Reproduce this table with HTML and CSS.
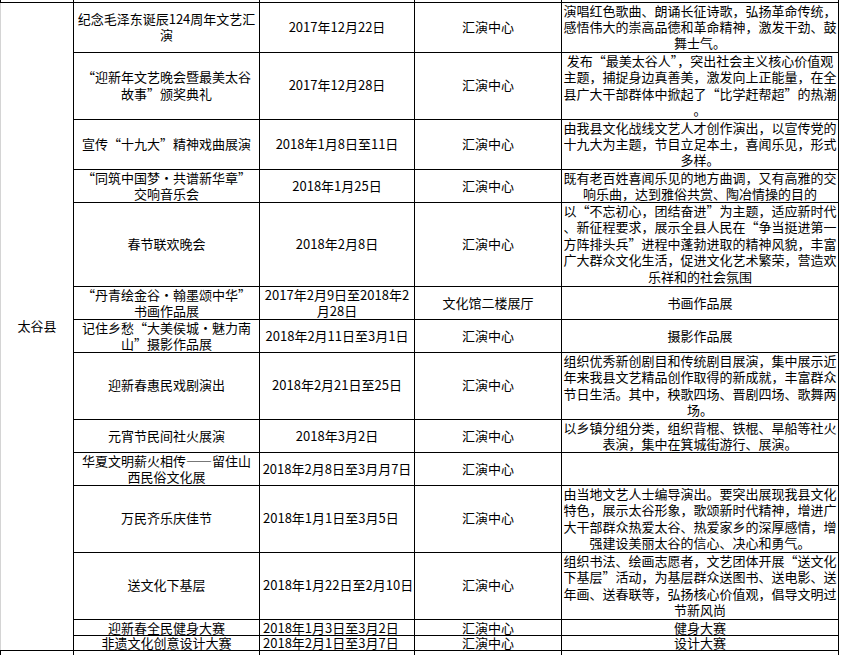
FILE: index.html
```html
<!DOCTYPE html>
<html lang="zh-CN">
<head>
<meta charset="utf-8">
<title>太谷县文化活动</title>
<link rel="stylesheet" href="styles.css">
</head>
<body>
<table class="sheet">
  <colgroup>
    <col class="c-county">
    <col class="c-name">
    <col class="c-date">
    <col class="c-venue">
    <col class="c-desc">
  </colgroup>
  <tr class="r16 cut-top">
    <td></td><td></td><td></td><td></td><td></td>
  </tr>
  <tr class="r50">
    <td class="county" rowspan="14">太谷县</td>
    <td>纪念毛泽东诞辰124周年文艺汇<br>演</td>
    <td>2017年12月22日</td>
    <td>汇演中心</td>
    <td class="fw">演唱红色歌曲、朗诵长征诗歌,弘扬革命传统,<br>感悟伟大的崇高品德和革命精神，激发干劲、鼓<br>舞士气。</td>
  </tr>
  <tr class="r67">
    <td class="fw">“迎新年文艺晚会暨最美太谷<br>故事”颁奖典礼</td>
    <td>2017年12月28日</td>
    <td>汇演中心</td>
    <td class="fw">发布“最美太谷人”，突出社会主义核心价值观<br>主题，捕捉身边真善美，激发向上正能量，在全<br>县广大干部群体中掀起了“比学赶帮超”的热潮<br>。</td>
  </tr>
  <tr class="r50">
    <td class="fw">宣传“十九大”精神戏曲展演</td>
    <td>2018年1月8日至11日</td>
    <td>汇演中心</td>
    <td class="fw">由我县文化战线文艺人才创作演出，以宣传党的<br>十九大为主题，节目立足本土，喜闻乐见，形式<br>多样。</td>
  </tr>
  <tr class="r33">
    <td class="fw">“同筑中国梦·共谱新华章”<br>交响音乐会</td>
    <td>2018年1月25日</td>
    <td>汇演中心</td>
    <td class="fw">既有老百姓喜闻乐见的地方曲调，又有高雅的交<br>响乐曲，达到雅俗共赏、陶冶情操的目的</td>
  </tr>
  <tr class="r84">
    <td>春节联欢晚会</td>
    <td>2018年2月8日</td>
    <td>汇演中心</td>
    <td class="fw">以“不忘初心，团结奋进”为主题，适应新时代<br>、新征程要求，展示全县人民在“争当挺进第一<br>方阵排头兵”进程中蓬勃进取的精神风貌，丰富<br>广大群众文化生活，促进文化艺术繁荣，营造欢<br>乐祥和的社会氛围</td>
  </tr>
  <tr class="r33">
    <td class="fw">“丹青绘金谷·翰墨颂中华”<br>书画作品展</td>
    <td>2017年2月9日至2018年2<br>月28日</td>
    <td>文化馆二楼展厅</td>
    <td>书画作品展</td>
  </tr>
  <tr class="r33">
    <td class="fw">记住乡愁“大美侯城·魅力南<br>山”摄影作品展</td>
    <td>2018年2月11日至3月1日</td>
    <td>汇演中心</td>
    <td>摄影作品展</td>
  </tr>
  <tr class="r67">
    <td>迎新春惠民戏剧演出</td>
    <td>2018年2月21日至25日</td>
    <td>汇演中心</td>
    <td class="fw">组织优秀新创剧目和传统剧目展演，集中展示近<br>年来我县文艺精品创作取得的新成就，丰富群众<br>节日生活。其中，秧歌四场、晋剧四场、歌舞两<br>场。</td>
  </tr>
  <tr class="r33">
    <td>元宵节民间社火展演</td>
    <td>2018年3月2日</td>
    <td>汇演中心</td>
    <td class="fw">以乡镇分组分类，组织背棍、铁棍、旱船等社火<br>表演，集中在箕城街游行、展演。</td>
  </tr>
  <tr class="r33">
    <td class="fw">华夏文明薪火相传——留住山<br>西民俗文化展</td>
    <td>2018年2月8日至3月月7日</td>
    <td>汇演中心</td>
    <td></td>
  </tr>
  <tr class="r67">
    <td>万民齐乐庆佳节</td>
    <td class="left">2018年1月1日至3月5日</td>
    <td>汇演中心</td>
    <td class="fw">由当地文艺人士编导演出。要突出展现我县文化<br>特色，展示太谷形象，歌颂新时代精神，增进广<br>大干部群众热爱太谷、热爱家乡的深厚感情，增<br>强建设美丽太谷的信心、决心和勇气。</td>
  </tr>
  <tr class="r67">
    <td>送文化下基层</td>
    <td class="left">2018年1月22日至2月10日</td>
    <td>汇演中心</td>
    <td class="fw">组织书法、绘画志愿者，文艺团体开展“送文化<br>下基层”活动，为基层群众送图书、送电影、送<br>年画、送春联等，弘扬核心价值观，倡导文明过<br>节新风尚</td>
  </tr>
  <tr class="r16 tight">
    <td>迎新春全民健身大赛</td>
    <td class="left">2018年1月3日至3月2日</td>
    <td>汇演中心</td>
    <td>健身大赛</td>
  </tr>
  <tr class="r15 tight">
    <td>非遗文化创意设计大赛</td>
    <td class="left">2018年2月1日至3月7日</td>
    <td>汇演中心</td>
    <td>设计大赛</td>
  </tr>
  <tr class="r33 cut-bottom">
    <td></td><td></td><td></td><td></td><td></td>
  </tr>
</table>
</body>
</html>
```
FILE: styles.css
```css
html, body {
  margin: 0;
  padding: 0;
  background: #ffffff;
  overflow: hidden;
}

.sheet {
  border-collapse: collapse;
  table-layout: fixed;
  width: 838px;
  margin-top: -14px;
  font-family: "Noto Sans CJK SC", "Noto Sans", sans-serif;
  font-size: 13px;
  line-height: 16px;
  color: #000;
}

.c-county { width: 73px; }
.c-name { width: 186px; }
.c-date { width: 155px; }
.c-venue { width: 147px; }
.c-desc { width: 277px; }

.sheet td {
  border: 1px solid #000;
  padding: 0;
  text-align: center;
  vertical-align: middle;
  white-space: nowrap;
  overflow: hidden;
}

.sheet td.fw {
  font-feature-settings: "fwid" 1;
}

.sheet td.county {
  border-left: 1px solid #d4d4d4;
}

.sheet td.left {
  text-align: left;
  padding-left: 3px;
}

.cut-top td { border-top: none; }
.cut-bottom td { border-bottom: none; }

.r15 { height: 15px; }
.r16 { height: 16px; }
.r33 { height: 33px; }
.r50 { height: 50px; }
.r67 { height: 67px; }
.r84 { height: 84px; }

.r33 td { line-height: 16px; }
.r50 td { line-height: 16.3px; }
.r67 td { line-height: 16.5px; }
.r84 td { line-height: 16.6px; }
.r16 td { line-height: 15px; }
.r15 td { line-height: 14px; }
.sheet td.county { line-height: 16px; }

.tight td {
  vertical-align: bottom;
}
```
